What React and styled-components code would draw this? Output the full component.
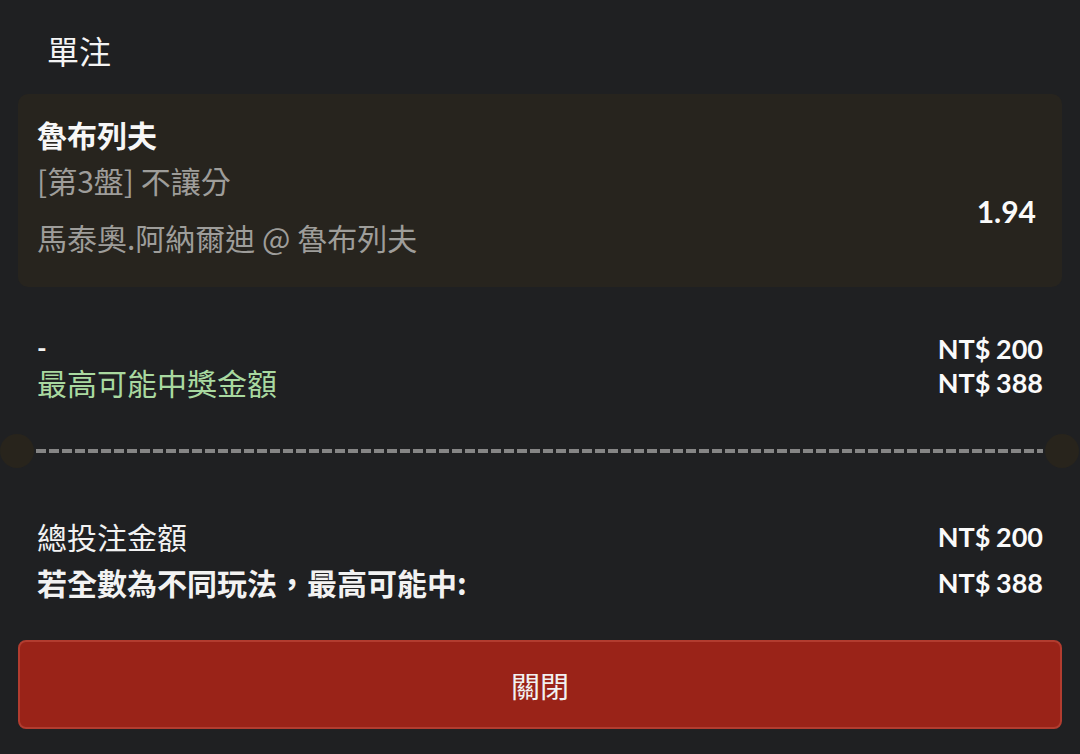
import React from "react"
import styled, { createGlobalStyle } from "styled-components"

const GlobalStyle = createGlobalStyle`
    html, body {
        margin: 0;
        padding: 0;
        background: #1f2022;
    }
    body {
        font-family: Lato, "Noto Sans CJK TC", sans-serif;
        color: #f2f2f2;
    }
`

const CJK = `"Noto Sans CJK TC", "Noto Sans", sans-serif`
const NUM = `Lato, "Noto Sans CJK TC", sans-serif`

const Page = styled.div`
    width: 1080px;
    height: 754px;
    overflow: hidden;
    box-sizing: border-box;
    padding: 27px 18px 0;
    background: #1f2022;
`

const Title = styled.div`
    font-family: ${CJK};
    font-size: 32px;
    line-height: 46px;
    color: #f4f4f4;
    padding-left: 29px;
    margin-bottom: 21px;
`

const Card = styled.div`
    background: #27241e;
    border-radius: 10px;
    padding: 17px 26px 27px 19px;
`

const Team = styled.div`
    font-family: ${CJK};
    font-size: 30px;
    font-weight: 700;
    line-height: 46px;
    color: #f7f7f7;
`

const CardBody = styled.div`
    display: flex;
    align-items: center;
    justify-content: space-between;
`

const Info = styled.div`
    display: flex;
    flex-direction: column;
    gap: 11px;
`

const InfoLine = styled.div`
    font-family: ${CJK};
    font-size: 30px;
    line-height: 46px;
    color: #9e9d9a;
`

const Odds = styled.div`
    font-family: ${NUM};
    font-size: 30px;
    font-weight: 700;
    color: #fafafa;
    padding-top: 4px;
`

const Summary = styled.div`
    padding: 0 19px;
    margin-top: ${(p) => p.$top}px;
`

const Row = styled.div`
    display: flex;
    justify-content: space-between;
    align-items: center;
    height: ${(p) => p.$h}px;
`

const Label = styled.span`
    font-family: ${CJK};
    font-size: 30px;
    line-height: 1;
    font-weight: ${(p) => (p.$bold ? 700 : 400)};
    color: ${(p) => p.$color || "#f2f2f2"};
`

const Placeholder = styled.span`
    font-family: ${NUM};
    font-size: 26px;
    line-height: 1;
    font-weight: 700;
    color: #f2f2f2;
`

const Amount = styled.span`
    font-family: ${NUM};
    font-size: 27px;
    line-height: 1;
    font-weight: 700;
    word-spacing: -1px;
    color: #fafafa;
`

const Divider = styled.div`
    position: relative;
    margin: 50px -18px 60px;
    height: 4px;

    &::before,
    &::after {
        content: "";
        position: absolute;
        top: 50%;
        width: 34px;
        height: 34px;
        border-radius: 50%;
        background: #28241c;
        transform: translateY(-50%);
    }
    &::before {
        left: 0;
    }
    &::after {
        right: 1px;
    }
`

const Dashes = styled.div`
    margin: 0 37px 0 36px;
    height: 4px;
    background: repeating-linear-gradient(
        90deg,
        #858585 0 10px,
        transparent 10px 13px
    );
`

const CloseButton = styled.button`
    display: block;
    width: 100%;
    height: 89px;
    margin-top: 35px;
    box-sizing: border-box;
    background: #9a2318;
    border: 2px solid #b23c2f;
    border-radius: 8px;
    font-family: ${CJK};
    font-size: 29px;
    color: #f1f1f1;
    cursor: pointer;
`

const App = () => {
    return (
        <>
            <GlobalStyle />
            <Page>
                <Title>單注</Title>
                <Card>
                    <Team>魯布列夫</Team>
                    <CardBody>
                        <Info>
                            <InfoLine>[第3盤] 不讓分</InfoLine>
                            <InfoLine>馬泰奧.阿納爾迪 @ 魯布列夫</InfoLine>
                        </Info>
                        <Odds>1.94</Odds>
                    </CardBody>
                </Card>

                <Summary $top={44}>
                    <Row $h={34}>
                        <Placeholder>-</Placeholder>
                        <Amount>NT$ 200</Amount>
                    </Row>
                    <Row $h={34}>
                        <Label $color="#a9d9a0">最高可能中獎金額</Label>
                        <Amount>NT$ 388</Amount>
                    </Row>
                </Summary>

                <Divider>
                    <Dashes />
                </Divider>

                <Summary $top={0}>
                    <Row $h={46}>
                        <Label>總投注金額</Label>
                        <Amount>NT$ 200</Amount>
                    </Row>
                    <Row $h={46}>
                        <Label $bold>若全數為不同玩法，最高可能中:</Label>
                        <Amount>NT$ 388</Amount>
                    </Row>
                </Summary>

                <CloseButton>關閉</CloseButton>
            </Page>
        </>
    )
}

export default App
